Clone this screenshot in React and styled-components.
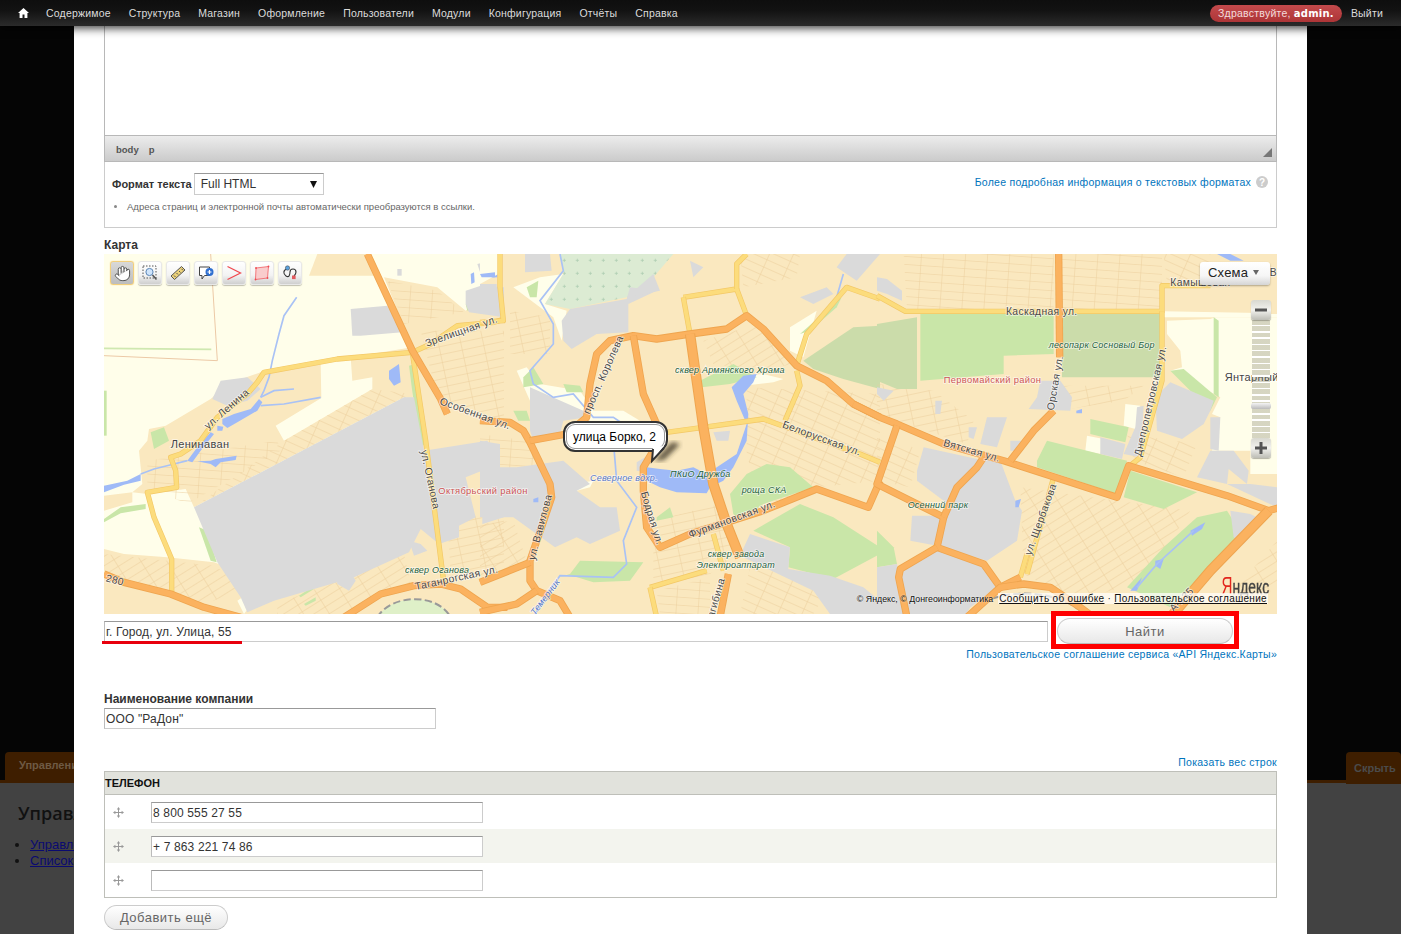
import React from "react";
import styled, { createGlobalStyle, css } from "styled-components";
import { Hand } from "lucide-react";

const MENU = ["Содержимое", "Структура", "Магазин", "Оформление", "Пользователи", "Модули", "Конфигурация", "Отчёты", "Справка"];

// map drawing: coordinates are 3x the screen, split in three zones (x offset per zone)
const ZONES = [
  {
    x: 0,
    tan: [
      "0,885 60,900 190,910 330,925 400,950 460,1000 400,1040 420,1080 0,1080",
      "105,590 130,560 135,525 185,515 320,435 370,390 470,355 650,330 652,432 515,515 540,560 805,405 805,370 745,380 740,310 925,280 925,430 900,430 270,760 245,705 130,720 85,715 0,725 0,770 85,745 85,715 115,690",
      "615,65 640,0 790,0 810,65",
      "840,70 1000,100 1085,170 1130,130 1160,0 1200,0 1200,1080 420,1080 900,430 925,430 925,280",
    ],
    grid: [
      [0, "950,230 1200,230 1200,520 1000,430"],
      [2, "130,620 520,560 530,590 250,750 130,700"],
      [1, "540,560 805,405 925,420 270,760"],
      [3, "0,900 190,920 330,935 440,1000 300,1050 0,970"],
      [0, "1030,800 1200,770 1200,950 1040,960"],
      [2, "850,80 1000,110 1080,175 900,210"],
      [3, "520,1050 900,900 920,990 720,1080 520,1080"],
    ],
    gray: [
      "270,760 900,430 930,430 960,590 1150,560 1185,630 1085,670 1115,790 1065,815 1065,850 1005,870 950,825 915,895 750,970 510,1040 430,1075 410,1030 340,925",
      "740,165 850,155 895,235 770,245 745,245",
      "325,435 350,380 430,370 470,405 430,440 370,455",
      "1085,110 1130,95 1200,100 1200,190 1095,175 1085,150",
      "1120,30 1180,15 1180,60 1130,60",
      "1135,770 1200,760 1200,790 1135,810",
      "915,860 950,870 970,890 930,905",
      "880,45 893,45 893,65 880,65",
      "695,950 730,935 755,980 735,1010 700,990",
    ],
    green: [
      "915,335 935,330 965,575 945,570",
      "0,410 8,410 8,545 0,545",
      "0,795 50,760 125,750 125,765 50,778 0,805",
      "285,820 310,830 338,925 320,920",
      "865,745 890,730 925,735 920,770 895,805 870,780",
      "730,860 760,850 770,875 745,890",
      "535,965 580,958 585,970 555,980",
      "585,1025 630,995 630,1005 590,1030",
      "600,1050 635,1030 635,1040 605,1055",
      "1085,150 1115,150 1110,165 1090,170",
      "140,535 180,520 195,560 150,585",
    ],
    water: [
      "855,350 885,330 890,385 870,395 855,375",
      "355,495 390,480 440,465 465,435 475,445 460,470 400,505 370,522 355,510",
      "340,515 358,518 355,530 340,530",
      "250,620 280,580 320,535 330,540 290,590 265,625",
      "280,622 320,620 335,615 398,605 395,618 350,625 335,640 320,630",
      "0,695 70,680 110,660 110,680 60,692 0,715",
      "1100,60 1110,55 1112,85 1102,90",
      "1135,65 1180,55 1180,70 1140,72",
    ],
    brooks: [
      "578,130 540,185 525,240 505,320 495,370 480,410 470,430",
      "470,430 510,410 570,405",
      "470,455 540,450 650,430",
      "110,660 150,645 210,630 250,620",
    ],
    orange: [
      "790,0 925,290 1010,435 1030,480",
      "0,960 60,985 200,1020 300,1060 410,1090",
      "720,1090 830,1020 930,995 1010,990 1070,1005 1150,1060 1210,1060",
    ],
    yellow: [
      "1200,195 1170,205 1060,215 980,270 925,295 700,315 480,355 460,385 430,420 340,490 290,560 230,600 200,610 215,650 218,700 130,715 150,790 203,915 203,1020",
      "925,295 965,560 1020,990",
    ],
    labels: [
      { t: "Зрелищная ул.", x: 968, y: 278, r: -19 },
      { t: "ул. Ленина", x: 312, y: 527, r: -41 },
      { t: "Ленинаван", x: 200, y: 582, k: "place" },
      { t: "Особенная ул.", x: 1005, y: 450, r: 20 },
      { t: "ул. Оганова", x: 950, y: 590, r: 78 },
      { t: "Октябрьский район", x: 1003, y: 719, k: "red" },
      { t: "сквер Оганова", x: 903, y: 957, k: "park" },
      { t: "Таганрогская ул.", x: 935, y: 1008, r: -12 },
      { t: "280", x: 4, y: 982, r: 14 },
    ],
  },
  {
    x: 1128,
    pale: [
      "100,100 180,70 250,60 195,150 260,170 245,260 220,190",
      "110,350 140,340 180,390 300,410 340,470 430,470 480,500 330,500 300,470 150,440",
      "930,220 1010,170 970,310 930,290",
      "790,365 850,360 910,375 880,385 790,395",
      "280,690 340,680 330,700 290,710",
      "0,0 60,0 55,60 0,90",
    ],
    dots: "240,0 580,0 520,70 480,100 440,130 270,165 195,150 250,60",
    park: ["970,320 1120,220 1200,215 1200,405 1090,375 1000,345"],
    grid: [
      [1, "800,400 1200,420 1200,680 1010,700 850,780 800,600"],
      [3, "670,260 830,210 940,330 830,350 700,330"],
      [2, "0,540 140,560 200,690 0,690"],
      [0, "520,800 720,750 770,900 690,960 520,1000"],
      [1, "780,0 960,0 950,70 790,100"],
      [3, "0,810 100,800 140,920 0,970"],
      [0, "90,170 210,190 210,300 90,300"],
      [2, "530,1010 690,970 690,1080 540,1080"],
      [1, "810,940 920,960 1050,1000 1000,1080 780,1080"],
    ],
    gray: [
      "245,200 270,165 440,135 450,100 530,110 445,150 445,235 350,240 275,285 250,260",
      "0,90 50,90 50,180 0,180",
      "135,0 210,0 215,50 135,55",
      "630,20 670,40 640,70",
      "0,560 60,570 60,640 110,640 250,620 330,690 290,710 360,760 410,760 420,830 330,870 290,850 225,880 100,790 0,790",
      "150,400 310,470 320,490 250,500 240,540 160,560 150,530",
      "810,840 930,880 925,945 1050,965 1150,1000 1200,1040 1200,1080 1050,1080 1000,1010 780,905",
      "960,130 1040,100 1060,120 1000,150",
      "1070,40 1100,0 1200,0 1130,80",
      "440,130 520,60 540,110",
      "700,535 750,530 745,560 710,560",
      "470,625 495,610 495,655 470,650",
    ],
    green: [
      "750,720 800,660 860,630 930,640 1000,700 850,750 780,800 760,780",
      "820,830 960,750 1060,790 1200,880 1200,900 1060,975 925,940 930,880",
      "270,960 300,920 490,925 450,980 340,985 260,960",
      "130,370 160,340 190,390 130,400",
      "250,390 300,395 310,415 260,415",
      "660,380 760,330 830,370 750,390 665,400",
      "140,100 175,80 170,130 150,130",
      "100,470 140,470 150,500 115,500",
      "960,240 1085,130 1070,160 990,230",
      "530,790 570,760 580,790 530,800",
    ],
    water: [
      "500,640 540,645 590,650 640,640 680,660 770,600 800,510 770,440 755,400 790,365 830,360 820,385 790,420 805,480 800,560 760,640 730,680 690,700 680,718 590,715 540,700 500,680",
      "160,735 175,730 175,745 160,745",
      "0,60 45,55 45,70 5,70",
    ],
    brooks: [
      "240,0 250,50 180,140 220,210 220,270 150,350 160,390 220,430 280,420 340,490 400,490 430,510",
      "400,560 410,680 470,760 430,860 440,930 400,970 240,965 200,1020 160,1090",
      "1070,130 1090,60",
    ],
    orange: [
      "0,500 90,505 130,530 150,565 210,690 215,730 150,920 150,980 170,1010 240,1040 270,1090",
      "150,560 260,540 320,490 330,390 350,300 390,260 460,245 530,255 630,240 740,225 800,185 850,225 950,335 1040,380 1120,450 1200,490",
      "460,245 490,420 530,510 520,590 490,640 490,710 500,820 540,880 630,840 850,770 1010,705 1165,760 1200,680",
      "0,985 150,925",
      "170,1010 110,1050 0,1075",
      "720,1090 745,960",
    ],
    wide: ["630,240 670,520 700,690 740,810 780,910"],
    yellow: [
      "610,130 770,105 800,185",
      "610,130 630,240",
      "770,105 770,30 800,0",
      "560,535 670,520 850,495 920,520 1000,550 1140,600 1200,625",
      "950,350 960,395 915,500",
      "950,335 980,240 1100,100 1200,135",
      "510,1000 680,950",
      "510,1000 530,1090",
      "700,840 730,950",
      "60,0 60,100 70,200 0,205",
    ],
    labels: [
      { t: "просп. Королева", x: 328, y: 482, r: -66 },
      { t: "ул. Вавилова", x: 164, y: 920, r: -75 },
      { t: "Бодрая ул.", x: 482, y: 716, r: 73 },
      { t: "Фурмановская ул.", x: 630, y: 852, r: -20 },
      { t: "Темерник", x: 165, y: 1085, r: -53, k: "water" },
      { t: "Северное вдхр.", x: 330, y: 681, k: "water" },
      { t: "ПКиО Дружба", x: 570, y: 670, k: "park" },
      { t: "сквер Армянского Храма", x: 585, y: 358, k: "park" },
      { t: "роща СКА", x: 785, y: 718, k: "park" },
      { t: "сквер завода", x: 683, y: 910, k: "park" },
      { t: "Электроаппарат", x: 650, y: 942, k: "park" },
      { t: "Белорусская ул.", x: 905, y: 520, r: 20 },
      { t: "Загибина", x: 696, y: 1112, r: -74 },
    ],
  },
  {
    x: 2319,
    pale: [
      "870,200 1000,195 1015,190 1200,190 1200,660 1120,660 1120,590 1005,590 1030,490 1005,480 1030,430 880,350 915,340 910,290 870,240",
      "860,172 1200,178 1200,190 860,190",
      "630,545 680,555 670,600 625,590",
      "745,450 790,455 775,525 740,515",
    ],
    park: ["555,180 855,180 855,370 555,370", "0,210 120,190 120,405 60,405 0,380"],
    grid: [
      [2, "80,0 530,0 530,165 90,165"],
      [2, "555,0 855,0 855,170 555,170"],
      [3, "430,700 720,740 940,770 800,980 600,1040 440,960"],
      [1, "0,530 130,590 100,700 0,680"],
      [0, "540,395 800,395 740,440 540,470"],
      [1, "750,540 960,570 920,670 770,620"],
      [0, "0,390 170,410 290,500 270,570 60,500 0,470"],
      [1, "860,0 1000,0 1000,90 870,90"],
      [3, "1080,1000 1200,860 1200,1000 1100,1060"],
    ],
    gray: [
      "120,650 140,580 300,615 370,620 415,740 435,770 420,860 330,920 180,875 100,860 105,785 200,785 200,740 160,710 120,680",
      "780,460 800,455 790,610 740,600 775,520",
      "835,430 880,385 1010,440 1000,470 980,510 915,555 840,530",
      "1000,490 1030,490 1025,590 1000,585",
      "670,550 745,570 735,615 670,600",
      "490,380 550,380 585,430 580,470 455,465 480,430",
      "330,490 390,490 360,580 310,570",
      "275,520 300,520 290,555 275,550",
      "400,560 440,560 420,590 400,590",
      "70,940 175,880 320,930 360,1000 280,1060 260,1090 90,1090",
      "0,940 60,930 90,1090 0,1090",
      "1000,590 1070,590 1115,650 1110,690 1055,645 1050,690 960,670",
      "1050,690 1200,760 1200,700 1120,690",
      "1060,770 1120,780 1160,800 1100,870 1070,850",
      "0,70 30,75 75,110 75,140 30,120 0,110",
      "0,400 50,410 20,440 0,420",
      "175,440 195,440 190,480 175,480",
    ],
    green: [
      "130,180 530,180 530,300 380,305 380,360 130,380",
      "880,350 920,345 1020,430 1000,470",
      "1010,190 1025,200 1025,430 1010,420",
      "640,495 755,520 745,565 680,550 640,540",
      "480,620 510,560 750,620 720,720 480,640",
      "760,650 960,715 860,765 740,730",
      "750,1000 860,880 960,790 1050,770 1100,850 1000,950 880,1060",
      "0,830 50,880 60,930 0,940",
    ],
    water: [
      "940,830 985,805 975,825 945,845",
      "835,920 860,915 850,945 835,935",
      "760,1010 795,970 780,1010",
      "598,470 615,465 615,478 598,478",
      "415,740 432,735 425,760 415,760",
      "1020,0 1060,0 1100,20 1060,20",
    ],
    brooks: ["780,1000 840,930 950,830"],
    orange: [
      "-71,450 9,490 60,510 200,570 380,620 720,730 755,635 1050,725 1175,770 1210,760",
      "545,0 548,310",
      "530,470 470,530 400,620",
      "60,515 0,690 200,790 180,880 320,930 370,1000 430,970",
      "200,790 240,700 300,640 320,610",
      "180,880 70,945 65,970 90,1090",
      "270,1090 370,1000 440,990 520,1000 610,1060 650,1090",
    ],
    wide: ["1175,770 1000,950 880,1090"],
    yellow: [
      "0,125 85,172 855,172 855,95 1000,95",
      "855,172 855,380 790,610 760,635",
      "450,960 530,670",
      "430,970 450,900",
    ],
    labels: [
      { t: "Каскадная ул.", x: 387, y: 183 },
      { t: "Камышовая", x: 880, y: 97 },
      { t: "лесопарк Сосновый Бор", x: 515, y: 283, k: "park" },
      { t: "Первомайский район", x: 200, y: 387, k: "red" },
      { t: "Орская ул.", x: 530, y: 470, r: -80 },
      { t: "Днепропетровская ул.", x: 792, y: 608, r: -77 },
      { t: "Вятская ул.", x: 197, y: 575, r: 16 },
      { t: "Осенний парк", x: 92, y: 763, k: "park" },
      { t: "ул. Щербакова", x: 462, y: 905, r: -70 },
      { t: "Янтарный", x: 1043, y: 380, k: "place" },
      { t: "В", x: 1178, y: 65 },
      { t: "А-135", x: 890, y: 1075, r: -45 },
    ],
  },
];

const Global = createGlobalStyle`
  html, body {
    margin: 0;
    padding: 0;
    background: #050505;
  }
  body {
    font-family: "Liberation Sans", Arial, sans-serif;
  }
`;

const Page = styled.div`
  width: 1401px;
  height: 934px;
  display: flex;
  flex-direction: column;
  overflow: hidden;
`;
const Toolbar = styled.div`
  position: relative;
  z-index: 2;
  height: 26px;
  flex: none;
  display: flex;
  align-items: center;
  padding: 0 18px 0 18px;
  background: linear-gradient(#0e0e0e 0, #121212 40%, #2b2b2b 100%);
  box-shadow: 0 2px 10px rgba(0, 0, 0, 0.8);
`;
const HomeLink = styled.a`
  display: flex;
  width: 28px;
`;
const MenuItem = styled.a`
  margin-right: 18px;
  color: #dcdcdc;
  font-size: 10.5px;
  letter-spacing: 0.19px;
`;
const UserBox = styled.div`
  margin-left: auto;
  display: flex;
  align-items: center;
`;
const Greeting = styled.span`
  height: 17px;
  width: 132px;
  box-sizing: border-box;
  display: flex;
  align-items: center;
  justify-content: center;
  border-radius: 9px;
  background: linear-gradient(#c34a4c, #ad3537);
  color: #f3dcdc;
  font-size: 10.5px;
  letter-spacing: 0.25px;
  b {
    margin-left: 3px;
    color: #fff;
    font-family: "DejaVu Sans", sans-serif;
    font-size: 10px;
  }
`;
const Logout = styled.a`
  margin-left: 9px;
  color: #dcdcdc;
  font-size: 10.5px;
  letter-spacing: 0.2px;
`;

const Stage = styled.div`
  position: relative;
  flex: 1;
  background: #424242;
`;
const BackTop = styled.div`
  height: 757px;
  box-sizing: border-box;
  padding: 0 0 0 5px;
  display: flex;
  justify-content: space-between;
  align-items: flex-end;
  background: #050505;
  border-bottom: 3px solid #3e1e00;
`;
const BackTab = styled.div`
  height: ${(p) => (p.$right ? "32px" : "28px")};
  margin-bottom: ${(p) => (p.$right ? "-4px" : "0")};
  width: ${(p) => (p.$right ? "55px" : "120px")};
  box-sizing: border-box;
  padding: ${(p) => (p.$right ? "10px 0 0 8px" : "7px 0 0 14px")};
  border-radius: 4px 4px 0 0;
  background: #3e1e00;
  color: ${(p) => (p.$right ? "#4b4b4b" : "#6e5a44")};
  font-size: 11px;
  font-weight: bold;
  white-space: nowrap;
  overflow: hidden;
`;
const BackBody = styled.div`
  padding: 18px 0 0 18px;
`;
const BackTitle = styled.div`
  color: #111;
  font-family: "Open Sans", sans-serif;
  font-size: 18px;
  font-weight: 600;
  line-height: 24px;
`;
const BackList = styled.ul`
  margin: 12px 0 0;
  padding: 0 0 0 12px;
  font-size: 13px;
  line-height: 16px;
  li::marker {
    color: #111;
  }
  a {
    color: #0a0a70;
    text-decoration: underline;
  }
`;

const Modal = styled.div`
  position: absolute;
  left: 74px;
  top: 0;
  width: 1233px;
  height: 908px;
  box-sizing: border-box;
  padding: 0 30px;
  background: #fff;
  overflow: hidden;
`;
const EditorArea = styled.div`
  height: 109px;
  border: solid #b8b8b8;
  border-width: 0 1px;
  background: #fff;
`;
const StatusBar = styled.div`
  position: relative;
  height: 27px;
  box-sizing: border-box;
  display: flex;
  align-items: center;
  padding: 2px 0 0 11px;
  border: 1px solid #b8b8b8;
  background: linear-gradient(#ececec, #cbcbcb);
  color: #555;
  font-size: 9.5px;
  font-weight: bold;
  span {
    margin-right: 10px;
  }
`;
const ResizeGrip = styled.i`
  position: absolute;
  right: 4px;
  bottom: 4px;
  border-style: solid;
  border-width: 0 0 9px 9px;
  border-color: transparent transparent #777 transparent;
`;
const FormatBox = styled.div`
  height: 66px;
  box-sizing: border-box;
  padding: 11px 8px 0 7px;
  border: 1px solid #ccc;
  border-top: 0;
`;
const FormatRow = styled.div`
  display: flex;
  align-items: center;
`;
const FormatLabel = styled.label`
  color: #333;
  font-size: 11px;
  font-weight: bold;
  margin-right: 2px;
`;
const FakeSelect = styled.div`
  width: 130px;
  height: 22px;
  box-sizing: border-box;
  display: flex;
  align-items: center;
  justify-content: space-between;
  padding: 0 6px;
  border: 1px solid #ccc;
  border-top-color: #999;
  color: #333;
  font-size: 12px;
  background: #fff;
`;
const HelpLink = styled.a`
  margin: -4px 0 0 auto;
  color: #0074bd;
  font-size: 10.5px;
  letter-spacing: 0.26px;
`;
const HelpMark = styled.span`
  width: 12px;
  height: 12px;
  margin: -4px 0 0 5px;
  border-radius: 50%;
  display: flex;
  align-items: center;
  justify-content: center;
  background: #ccc;
  color: #fff;
  font-size: 10px;
  font-weight: bold;
`;
const Tips = styled.ul`
  margin: 4px 0 0;
  padding: 0 0 0 15px;
  color: #666;
  font-size: 9.5px;
  line-height: 15px;
  li::marker {
    color: #888;
  }
`;
const FieldLabel = styled.label`
  display: block;
  margin-top: ${(p) => p.$top}px;
  color: #333;
  font-size: 12px;
  font-weight: bold;
  line-height: 12px;
`;

const MapBox = styled.div`
  position: relative;
  height: 360px;
  margin-top: 3px;
  overflow: hidden;
`;
const MapSvg = styled.svg`
  display: block;
  width: 1173px;
  height: 360px;
  background: #fffeea;
`;
const labelKinds = {
  street: css`
    fill: #4a4a4a;
    font-size: 31px;
    letter-spacing: 1px;
  `,
  place: css`
    fill: #444;
    font-size: 33px;
    letter-spacing: 1px;
  `,
  park: css`
    fill: #1f6240;
    font-size: 27px;
    font-style: italic;
    letter-spacing: 0.6px;
  `,
  red: css`
    fill: #cc5656;
    font-size: 28px;
    letter-spacing: 1px;
  `,
  water: css`
    fill: #5878c8;
    font-size: 27px;
    font-style: italic;
    letter-spacing: 0.6px;
  `,
};
const MapLabel = styled.text`
  font-family: "Liberation Sans", sans-serif;
  paint-order: stroke;
  stroke: rgba(255, 255, 255, 0.6);
  stroke-width: 5px;
  ${(p) => labelKinds[p.$kind || "street"]}
`;

const MapTools = styled.div`
  position: absolute;
  left: 6px;
  top: 7px;
  display: flex;
  gap: 4px;
`;
const MapTool = styled.div`
  width: 24px;
  height: 24px;
  box-sizing: border-box;
  display: flex;
  align-items: center;
  justify-content: center;
  border-radius: 3px;
  border: 1px solid ${(p) => (p.$active ? "#f2cf7c" : "#e8e8e8")};
  background: ${(p) => (p.$active ? "linear-gradient(#d9d9d9, #bdbdbd)" : "linear-gradient(#fff, #f3f3f3 60%, #cfcfcf)")};
  box-shadow: ${(p) => (p.$active ? "0 0 1px #eebb55" : "0 1px 1px rgba(0,0,0,.25)")};
`;
const SchemeButton = styled.div`
  position: absolute;
  right: 7px;
  top: 8px;
  width: 70px;
  height: 23px;
  box-sizing: border-box;
  display: flex;
  align-items: center;
  padding: 0 0 2px 8px;
  border-radius: 3px;
  background: linear-gradient(#fff, #f6f6f6 60%, #d5d5d5);
  box-shadow: 0 1px 2px rgba(0, 0, 0, 0.3);
  color: #222;
  font-size: 13px;
  letter-spacing: 0.2px;
  i {
    margin-left: 5px;
    border-style: solid;
    border-width: 5px 3.5px 0;
    border-color: #666 transparent transparent;
  }
`;
const ZoomControl = styled.div`
  position: absolute;
  right: 6px;
  top: 46px;
  width: 20px;
  height: 158px;
  display: flex;
  flex-direction: column;
`;
const ZoomButton = styled.div`
  height: 20px;
  flex: none;
  display: flex;
  align-items: center;
  justify-content: center;
  border-radius: 3px;
  background: linear-gradient(#d8d8d0, #f2f2ee 50%, #bdbdb5);
  box-shadow: 0 1px 1px rgba(0, 0, 0, 0.3);
`;
const ZoomTrack = styled.div`
  position: relative;
  flex: 1;
  margin: 0 1px;
  background: repeating-linear-gradient(rgba(120, 120, 100, 0.3) 0 4.8px, #fff 4.8px 6.3px);
`;
const ZoomHandle = styled.div`
  position: absolute;
  left: -1px;
  right: -1px;
  top: 83px;
  height: 6px;
  border-radius: 2px;
  background: linear-gradient(#f4f4f4, #bbb);
`;
const Balloon = styled.div`
  position: absolute;
  left: 459px;
  top: 167px;
  width: 105px;
  height: 31px;
  box-sizing: border-box;
  display: flex;
  align-items: center;
  justify-content: center;
  padding-right: 2px;
  border-radius: 12px;
  border: 2px solid #333;
  background: #fff;
  box-shadow: inset 0 0 0 1px #fff, inset 0 0 0 2px #999;
  color: #000;
  font-size: 12px;
`;
const BalloonArt = styled.svg`
  position: absolute;
  left: 530px;
  top: 180px;
`;
const MapFooter = styled.div`
  position: absolute;
  right: 9px;
  bottom: 10px;
  display: flex;
  align-items: center;
  font-size: 9.5px;
  color: #111;
`;
const Copyright = styled.span`
  margin-right: 5px;
  font-size: 8.8px;
  text-shadow: 0 0 2px #fff;
`;
const LegalLinks = styled.span`
  padding: 0 1px;
  background: rgba(255, 255, 255, 0.7);
  letter-spacing: 0.32px;
  font-size: 10px;
  a {
    color: #111;
    text-decoration: underline;
  }
`;
const YandexLogo = styled.div`
  position: absolute;
  right: 8px;
  bottom: 16px;
  color: #444;
  font-size: 21px;
  line-height: 22px;
  -webkit-text-stroke: 0.4px #444;
  transform: scaleX(0.66);
  transform-origin: right center;
  b {
    color: #e2271d;
    -webkit-text-stroke: 0;
    font-weight: normal;
    font-size: 23px;
  }
`;

const SearchRow = styled.div`
  display: flex;
  align-items: flex-start;
  gap: 9px;
  height: 26px;
  margin-top: 4px;
`;
const TextField = styled.input`
  display: block;
  box-sizing: border-box;
  width: ${(p) => p.$width}px;
  height: 21px;
  padding: 1px 1px 0;
  border: 1px solid #ccc;
  border-top-color: #999;
  border-left-color: #bbb;
  outline: 0;
  background: #fff;
  color: #333;
  font-family: "Liberation Sans", sans-serif;
  font-size: 12px;
  letter-spacing: 0.15px;
`;
const AddressCell = styled.div`
  position: relative;
  margin-top: 3px;
  &::after {
    content: "";
    position: absolute;
    left: -2px;
    top: 20px;
    width: 140px;
    height: 3px;
    background: #e8000d;
  }
`;
const MarkedCell = styled.div`
  position: relative;
  &::after {
    content: "";
    position: absolute;
    left: -6px;
    right: -6px;
    top: -7px;
    bottom: -5px;
    border: 5px solid #f00;
    pointer-events: none;
  }
`;
const PillButton = styled.button`
  display: block;
  box-sizing: border-box;
  width: ${(p) => p.$width}px;
  height: ${(p) => p.$height || 25}px;
  padding: 0;
  border: 1px solid #ccc;
  border-bottom-color: #bbb;
  border-radius: 13px;
  background: linear-gradient(#fff, #e8e8e8);
  color: #666;
  font-family: "Liberation Sans", sans-serif;
  font-size: 13px;
  letter-spacing: 0.5px;
`;
const RightLink = styled.a`
  display: block;
  margin-top: ${(p) => p.$top}px;
  color: #0074bd;
  font-size: 10.5px;
  line-height: 12px;
  text-align: right;
  letter-spacing: ${(p) => p.$spacing}px;
`;
const CompanyField = styled.div`
  margin-top: 3px;
`;
const PhoneTable = styled.div`
  margin-top: 3px;
  border: 1px solid #bebfb9;
  border-top: 0;
`;
const PhoneHead = styled.div`
  height: 24px;
  box-sizing: border-box;
  display: flex;
  align-items: center;
  margin: 0 -1px;
  border: 1px solid #bebfb9;
  background: #e1e2dc;
  color: #111;
  font-size: 11px;
  font-weight: bold;
`;
const PhoneRow = styled.div`
  height: 34px;
  display: flex;
  align-items: center;
  background: ${(p) => (p.$alt ? "#f3f4ee" : "#fff")};
`;
const DragHandle = styled.div`
  width: 46px;
  flex: none;
  display: flex;
  justify-content: center;
  padding-right: 20px;
  box-sizing: border-box;
`;
const AddButtonRow = styled.div`
  margin-top: 7px;
`;

const HomeIcon = () => (
  <svg width="11" height="10" viewBox="0 0 11 10">
    <path d="M5.5 0 L11 5 H9.4 V10 H6.5 V6.5 H4.5 V10 H1.6 V5 H0 Z" fill="#fff" />
  </svg>
);

const DragIcon = () => (
  <svg width="11" height="11" viewBox="0 0 11 11" fill="#999">
    <path d="M5.5 0 L7.2 2.4 H6 V5 H8.6 V3.8 L11 5.5 L8.6 7.2 V6 H6 V8.6 H7.2 L5.5 11 L3.8 8.6 H5 V6 H2.4 V7.2 L0 5.5 L2.4 3.8 V5 H5 V2.4 H3.8 Z" />
  </svg>
);

const ZoomIcon = () => (
  <svg width="16" height="16" viewBox="0 0 16 16" fill="none">
    <rect x="1" y="1" width="13" height="12" stroke="#555" strokeDasharray="1.5 1.5" />
    <circle cx="7.5" cy="7" r="3.6" fill="#cfe4fb" stroke="#5b86b8" />
    <path d="M10.5 10 L14.5 14.5" stroke="#555" strokeWidth="1.6" />
  </svg>
);
const RulerIcon = () => (
  <svg width="16" height="16" viewBox="0 0 16 16">
    <path d="M1 11 L11.5 1.5 L15 5 L4.5 14.5 Z" fill="#ecd27a" stroke="#555" />
    <path d="M4 10.5 L5.5 12 M6.5 8 L8 9.5 M9 6 L10.5 7.5 M11.5 3.8 L13 5.3" stroke="#555" />
  </svg>
);
const NoteIcon = () => (
  <svg width="16" height="16" viewBox="0 0 16 16">
    <path d="M1.5 2 H11.5 V10.5 H6.5 L4 14 V10.5 H1.5 Z" fill="#fff" stroke="#444" />
    <circle cx="11.5" cy="7" r="4" fill="#2f6fd0" />
    <path d="M9.5 7 H13.5 M11.5 5 V9" stroke="#fff" strokeWidth="1.2" />
  </svg>
);
const LineIcon = () => (
  <svg width="16" height="16" viewBox="0 0 16 16" fill="none">
    <path d="M1.5 1.5 L14.5 8 L1.5 14.5" stroke="#f04a50" strokeWidth="1.3" />
  </svg>
);
const AreaIcon = () => (
  <svg width="16" height="16" viewBox="0 0 16 16">
    <path d="M2 3 L14.5 1.5 L13.5 13 L1.5 14.5 Z" fill="#f9cccc" stroke="#f04a50" strokeWidth="0.7" />
    <g fill="#f04a50">
      <circle cx="2" cy="3" r="0.9" />
      <circle cx="14.5" cy="1.5" r="0.9" />
      <circle cx="13.5" cy="13" r="0.9" />
      <circle cx="1.5" cy="14.5" r="0.9" />
    </g>
  </svg>
);
const RouteIcon = () => (
  <svg width="16" height="16" viewBox="0 0 16 16" fill="none">
    <path d="M5 4 C1 5 1 9 4 11 C7 13 8 10 8 7 C8 3 14 3 14 7 C14 9 13 10 12 11" stroke="#333" strokeWidth="1.1" />
    <circle cx="5.5" cy="3" r="2.2" fill="#5aa0dc" stroke="#444" strokeWidth="0.5" />
    <rect x="10" y="10.5" width="3.6" height="3.6" fill="#e2585e" />
  </svg>
);

const MapPicture = () => (
  <MapSvg viewBox="0 0 3519 1080">
    <defs>
      {[-12, 24, 4, -32].map((a, i) => (
        <pattern key={a} id={`streets${i}`} width="66" height="24" patternUnits="userSpaceOnUse" patternTransform={`rotate(${a})`}>
          <path d="M0 0 H66 M0 0 V24" stroke="#ecce9c" strokeWidth="3" fill="none" />
        </pattern>
      ))}
      <pattern id="forest" width="39" height="39" patternUnits="userSpaceOnUse">
        <rect width="39" height="39" fill="#dcebd3" />
        <path d="M14 19 H24 M19 14 V24" stroke="#a9c9ae" strokeWidth="2" />
      </pattern>
      <filter id="soft">
        <feGaussianBlur stdDeviation="0.7" />
      </filter>
    </defs>
    <g filter="url(#soft)">
      {ZONES.map((z) => (
        <g key={z.x} transform={`translate(${z.x} 0)`}>
          {z.x === 1128 && <rect x="0" y="0" width="2391" height="1080" fill="#fae8bf" />}
          {(z.tan || []).map((p) => (
            <polygon key={p} points={p} fill="#fae8bf" />
          ))}
        </g>
      ))}
      {ZONES.map((z) => (
        <g key={z.x} transform={`translate(${z.x} 0)`}>
          {z.grid.map(([g, p]) => (
            <polygon key={p} points={p} fill={`url(#streets${g})`} />
          ))}
          {(z.pale || []).map((p) => (
            <polygon key={p} points={p} fill="#fffeea" />
          ))}
          {z.dots && <polygon points={z.dots} fill="url(#forest)" />}
          {z.green.map((p) => (
            <polygon key={p} points={p} fill="#c9e6a8" />
          ))}
          {(z.park || []).map((p) => (
            <polygon key={p} points={p} fill="#cbdcaa" />
          ))}
          {z.gray.map((p) => (
            <polygon key={p} points={p} fill="#dadada" />
          ))}
          {z.water.map((p) => (
            <polygon key={p} points={p} fill="#9fbaf7" />
          ))}
          {z.brooks.map((p) => (
            <polyline key={p} points={p} fill="none" stroke="#a9c2f5" strokeWidth="5" />
          ))}
        </g>
      ))}
      <polyline points="320,0 340,320 0,305" fill="none" stroke="#ecc9a6" strokeWidth="3" />
      <polyline points="0,283 322,286" fill="none" stroke="#cfe8b0" strokeWidth="5" />
      <path d="M2590 1090 C2640 1000 2860 990 2950 1090" fill="none" stroke="#999" strokeWidth="6" strokeDasharray="22 10" />
      <path d="M820 1090 C860 1020 1000 1015 1040 1090" fill="#dff0c8" stroke="#999" strokeWidth="6" strokeDasharray="22 10" />
      {ZONES.map((z) => (
        <g key={z.x} transform={`translate(${z.x} 0)`} fill="none" strokeLinejoin="round">
          {z.yellow.map((p) => (
            <React.Fragment key={p}>
              <polyline points={p} stroke="#f3c866" strokeWidth="16" />
              <polyline points={p} stroke="#fcdc7c" strokeWidth="12" />
            </React.Fragment>
          ))}
          {z.orange.map((p) => (
            <React.Fragment key={p}>
              <polyline points={p} stroke="#efa54f" strokeWidth="22" />
              <polyline points={p} stroke="#fbb25f" strokeWidth="17" />
            </React.Fragment>
          ))}
          {(z.wide || []).map((p) => (
            <React.Fragment key={p}>
              <polyline points={p} stroke="#efa54f" strokeWidth="31" />
              <polyline points={p} stroke="#fbb25f" strokeWidth="25" />
            </React.Fragment>
          ))}
        </g>
      ))}
    </g>
    {ZONES.map((z) => (
      <g key={z.x} transform={`translate(${z.x} 0)`}>
        {z.labels.map((l) => (
          <MapLabel key={l.t} x={l.x} y={l.y} $kind={l.k} transform={l.r ? `rotate(${l.r} ${l.x} ${l.y})` : undefined}>
            {l.t}
          </MapLabel>
        ))}
      </g>
    ))}
  </MapSvg>
);

export default function App() {
  return (
    <Page>
      <Global />
      <Toolbar>
        <HomeLink>
          <HomeIcon />
        </HomeLink>
        {MENU.map((m) => (
          <MenuItem key={m}>{m}</MenuItem>
        ))}
        <UserBox>
          <Greeting>
            Здравствуйте, <b>admin.</b>
          </Greeting>
          <Logout>Выйти</Logout>
        </UserBox>
      </Toolbar>
      <Stage>
        <BackTop>
          <BackTab>Управление</BackTab>
          <BackTab $right>Скрыть</BackTab>
        </BackTop>
        <BackBody>
          <BackTitle>Управление</BackTitle>
          <BackList>
            <li>
              <a>Управление</a>
            </li>
            <li>
              <a>Список</a>
            </li>
          </BackList>
        </BackBody>
        <Modal>
          <EditorArea />
          <StatusBar>
            <span>body</span>
            <span>p</span>
            <ResizeGrip />
          </StatusBar>
          <FormatBox>
            <FormatRow>
              <FormatLabel>Формат текста</FormatLabel>
              <FakeSelect>
                Full HTML
                <svg width="7" height="7" viewBox="0 0 7 7">
                  <path d="M0 0 H7 L3.5 7 Z" fill="#111" />
                </svg>
              </FakeSelect>
              <HelpLink>Более подробная информация о текстовых форматах</HelpLink>
              <HelpMark>?</HelpMark>
            </FormatRow>
            <Tips>
              <li>Адреса страниц и электронной почты автоматически преобразуются в ссылки.</li>
            </Tips>
          </FormatBox>
          <FieldLabel $top={11}>Карта</FieldLabel>
          <MapBox>
            <MapPicture />
            <MapTools>
              <MapTool $active>
                <Hand size={17} strokeWidth={1.3} color="#444" fill="#fff" />
              </MapTool>
              <MapTool>
                <ZoomIcon />
              </MapTool>
              <MapTool>
                <RulerIcon />
              </MapTool>
              <MapTool>
                <NoteIcon />
              </MapTool>
              <MapTool>
                <LineIcon />
              </MapTool>
              <MapTool>
                <AreaIcon />
              </MapTool>
              <MapTool>
                <RouteIcon />
              </MapTool>
            </MapTools>
            <SchemeButton>
              Схема<i />
            </SchemeButton>
            <ZoomControl>
              <ZoomButton>
                <svg width="12" height="12" viewBox="0 0 12 12">
                  <rect y="4.5" width="12" height="3" fill="#555" />
                </svg>
              </ZoomButton>
              <ZoomTrack>
                <ZoomHandle />
              </ZoomTrack>
              <ZoomButton>
                <svg width="12" height="12" viewBox="0 0 12 12">
                  <path d="M0 4.5 H4.5 V0 H7.5 V4.5 H12 V7.5 H7.5 V12 H4.5 V7.5 H0 Z" fill="#555" />
                </svg>
              </ZoomButton>
            </ZoomControl>
            <BalloonArt width="60" height="40" viewBox="0 0 60 40">
              <defs>
                <filter id="balloonShade">
                  <feGaussianBlur stdDeviation="2.5" />
                </filter>
              </defs>
              <path d="M20 27 L38 8 L46 10 L30 26 Z" fill="#2e2618" opacity="0.75" filter="url(#balloonShade)" />
            </BalloonArt>
            <Balloon>улица Борко, 2</Balloon>
            <BalloonArt width="60" height="40" viewBox="0 0 60 40">
              <path d="M19 13 L18 27 L30 12 Z" fill="#fff" />
              <path d="M19 15 L18 27 L30 14" fill="none" stroke="#333" strokeWidth="2" />
            </BalloonArt>
            <YandexLogo>
              <b>Я</b>ндекс
            </YandexLogo>
            <MapFooter>
              <Copyright>© Яндекс, © Донгеоинформатика</Copyright>
              <LegalLinks>
                <a>Сообщить об ошибке</a> · <a>Пользовательское соглашение</a>
              </LegalLinks>
            </MapFooter>
          </MapBox>
          <SearchRow>
            <AddressCell>
              <TextField $width={944} readOnly value="г. Город, ул. Улица, 55" />
            </AddressCell>
            <MarkedCell>
              <PillButton $width={176} $height={26}>
                Найти
              </PillButton>
            </MarkedCell>
          </SearchRow>
          <RightLink $top={4} $spacing={0.27}>
            Пользовательское соглашение сервиса «API Яндекс.Карты»
          </RightLink>
          <FieldLabel $top={33}>Наименование компании</FieldLabel>
          <CompanyField>
            <TextField $width={332} readOnly value={'ООО "РаДон"'} />
          </CompanyField>
          <RightLink $top={27} $spacing={0.3}>
            Показать вес строк
          </RightLink>
          <PhoneTable>
            <PhoneHead>ТЕЛЕФОН</PhoneHead>
            {["8 800 555 27 55", "+ 7 863 221 74 86", ""].map((v, i) => (
              <PhoneRow key={i} $alt={i === 1}>
                <DragHandle>
                  <DragIcon />
                </DragHandle>
                <TextField $width={332} readOnly value={v} />
              </PhoneRow>
            ))}
          </PhoneTable>
          <AddButtonRow>
            <PillButton $width={124}>Добавить ещё</PillButton>
          </AddButtonRow>
        </Modal>
      </Stage>
    </Page>
  );
}
